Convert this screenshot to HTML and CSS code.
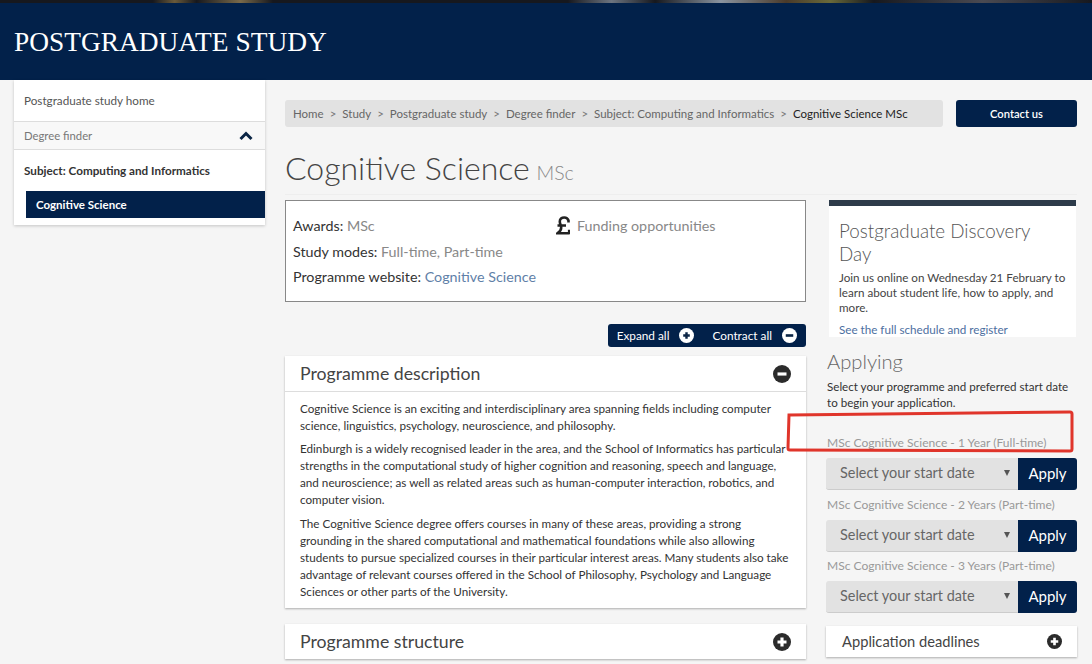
FILE: index.html
```html
<!DOCTYPE html>
<html lang="en">
<head>
    <meta charset="UTF-8">
    <title>Cognitive Science MSc</title>
    <link rel="stylesheet" href="styles.css">
</head>
<body>

<div class="photo-strip"></div>
<header class="site-header">
    <h1>POSTGRADUATE STUDY</h1>
</header>

<div class="page">
    <nav class="side-nav">
        <a href="#" class="nav-home">Postgraduate study home</a>
        <div class="nav-finder">
            <span>Degree finder</span>
            <svg width="14" height="10" viewBox="0 0 14 10"><path d="M1.500 8 7 2.500 12.500 8" fill="none" stroke="#0b2545" stroke-width="3"/></svg>
        </div>
        <a href="#" class="nav-subject">Subject: Computing and Informatics</a>
        <a href="#" class="nav-active">Cognitive Science</a>
    </nav>

    <main class="content">
        <div class="top-row">
            <div class="breadcrumb">
                <a href="#">Home</a><i>&gt;</i>
                <a href="#">Study</a><i>&gt;</i>
                <a href="#">Postgraduate study</a><i>&gt;</i>
                <a href="#">Degree finder</a><i>&gt;</i>
                <a href="#">Subject: Computing and Informatics</a><i>&gt;</i>
                <b>Cognitive Science MSc</b>
            </div>
            <a href="#" class="contact-btn">Contact us</a>
        </div>

        <h2 class="page-title">Cognitive Science <small>MSc</small></h2>

        <div class="columns">
            <div class="main-col">
                <div class="facts">
                    <div class="facts-left">
                        <p><span>Awards:</span> MSc</p>
                        <p><span>Study modes:</span> Full-time, Part-time</p>
                        <p><span>Programme website:</span> <a href="#">Cognitive Science</a></p>
                    </div>
                    <div class="facts-right">
                        <svg width="14" height="19" viewBox="0 0 14 19"><path d="M12.500 6.500V4.500C11.800 2.500 10.300 1.500 8.300 1.500 5.600 1.500 3.800 3 3.800 5.500c0 2.500 1.400 4 1.400 6.200 0 2.300-1.200 3.800-3.700 5.600h10.800c.6 0 .9-.3.9-.9v-2.600M1.500 9.500h8.500" fill="none" stroke="#222" stroke-width="2.600"/></svg>
                        <span>Funding opportunities</span>
                    </div>
                </div>

                <div class="toggle-row">
                    <div class="toggle-all">
                        <span>Expand all</span>
                        <svg class="round-icon" viewBox="0 0 16 16"><circle cx="8" cy="8" r="8" fill="#fff"/><path d="M8 4.500v7M4.500 8h7" stroke="#0b2545" stroke-width="2.600"/></svg>
                        <span class="contract">Contract all</span>
                        <svg class="round-icon" viewBox="0 0 16 16"><circle cx="8" cy="8" r="8" fill="#fff"/><path d="M4 8h8" stroke="#0b2545" stroke-width="2.800"/></svg>
                    </div>
                </div>

                <section class="panel">
                    <div class="panel-head open">
                        <h3>Programme description</h3>
                        <svg class="round-icon big" viewBox="0 0 16 16"><circle cx="8" cy="8" r="8" fill="#2b2b2b"/><path d="M4 8h8" stroke="#fff" stroke-width="2.800"/></svg>
                    </div>
                    <div class="panel-body">
                        <p>Cognitive Science is an exciting and interdisciplinary area spanning fields including computer<br>science, linguistics, psychology, neuroscience, and philosophy.</p>
                        <p>Edinburgh is a widely recognised leader in the area, and the School of Informatics has particular<br>strengths in the computational study of higher cognition and reasoning, speech and language,<br>and neuroscience; as well as related areas such as human-computer interaction, robotics, and<br>computer vision.</p>
                        <p>The Cognitive Science degree offers courses in many of these areas, providing a strong<br>grounding in the shared computational and mathematical foundations while also allowing<br>students to pursue specialized courses in their particular interest areas. Many students also take<br>advantage of relevant courses offered in the School of Philosophy, Psychology and Language<br>Sciences or other parts of the University.</p>
                    </div>
                </section>

                <section class="panel">
                    <div class="panel-head">
                        <h3>Programme structure</h3>
                        <svg class="round-icon big" viewBox="0 0 16 16"><circle cx="8" cy="8" r="8" fill="#2b2b2b"/><path d="M8 4v8M4 8h8" stroke="#fff" stroke-width="2.800"/></svg>
                    </div>
                </section>
            </div>

            <aside class="side-col">
                <div class="promo">
                    <h4>Postgraduate Discovery<br>Day</h4>
                    <p>Join us online on Wednesday 21 February to learn about student life, how to apply, and more.</p>
                    <a href="#">See the full schedule and register</a>
                </div>

                <h3 class="apply-title">Applying</h3>
                <p class="apply-intro">Select your programme and preferred start date to begin your application.</p>

                <div class="apply-item first">
                    <label>MSc Cognitive Science - 1 Year (Full-time)</label>
                    <div class="apply-row">
                        <div class="fake-select">Select your start date</div>
                        <button>Apply</button>
                    </div>
                </div>
                <div class="apply-item">
                    <label>MSc Cognitive Science - 2 Years (Part-time)</label>
                    <div class="apply-row">
                        <div class="fake-select">Select your start date</div>
                        <button>Apply</button>
                    </div>
                </div>
                <div class="apply-item">
                    <label>MSc Cognitive Science - 3 Years (Part-time)</label>
                    <div class="apply-row">
                        <div class="fake-select">Select your start date</div>
                        <button>Apply</button>
                    </div>
                </div>

                <div class="deadlines">
                    <span>Application deadlines</span>
                    <svg class="round-icon" viewBox="0 0 16 16"><circle cx="8" cy="8" r="8" fill="#2b2b2b"/><path d="M8 4v8M4 8h8" stroke="#fff" stroke-width="2.800"/></svg>
                </div>
            </aside>
        </div>
    </main>
</div>

<svg class="annotation" width="290" height="44" viewBox="0 0 290 44"><path d="M3 5 284 2Q286 2 286 4L286 39Q286 41 284 41L4 40Q2 40 2 38Z" fill="none" stroke="#e0352b" stroke-width="3"/></svg>

</body>
</html>
```

FILE: styles.css
```css
html, body {
    height: 664px;
    overflow: hidden;
}

body {
    font-family: Lato, "Noto Sans", Arial, sans-serif;
    margin: 0;
    padding: 0;
    background-color: #f5f5f5;
    color: #333;
    position: relative;
}

a {
    text-decoration: none;
}

.photo-strip {
    height: 3px;
    background: linear-gradient(90deg, #16181e 0, #16181e 14%, #6a5a3a 16%, #16181e 18%, #7a6a4a 22%, #16181e 25%, #16181e 52%, #6c7480 56%, #16181e 60%, #8a94a0 66%, #4a3a2a 72%, #6a6a3a 76%, #16181e 80%, #4a4a52 90%, #16181e 100%);
}

.site-header {
    height: 75px;
    padding-top: 2px;
    background-color: #02214a;
    display: flex;
    align-items: center;
    padding-left: 14px;
}

.site-header h1 {
    margin: 0;
    font-family: "Liberation Serif", "Times New Roman", serif;
    font-weight: normal;
    font-size: 27.400px;
    color: #fff;
}

.page {
    display: flex;
    padding-left: 14px;
}

/* left nav */
.side-nav {
    width: 251px;
    height: 145px;
    background-color: #fff;
    box-shadow: 0 1px 3px rgba(0, 0, 0, 0.2);
    font-size: 11.700px;
    flex-shrink: 0;
}

.side-nav a {
    display: block;
}

.nav-home {
    height: 41px;
    line-height: 41px;
    padding-left: 10px;
    color: #555;
    border-bottom: 1px solid #ddd;
}

.nav-finder {
    height: 27px;
    padding: 0 12px 0 10px;
    display: flex;
    align-items: center;
    justify-content: space-between;
    background-color: #f8f8f8;
    border-bottom: 1px solid #ddd;
    color: #777;
    font-size: 11.300px;
}

.nav-subject {
    height: 41px;
    line-height: 41px;
    padding-left: 10px;
    color: #333;
    font-weight: 700;
}

.nav-active {
    margin-left: 12px;
    height: 27px;
    line-height: 28px;
    padding-left: 10px;
    background-color: #02214a;
    color: #fff;
    font-weight: 700;
    font-size: 11.500px;
}

/* main area */
.content {
    margin-left: 20px;
    width: 792px;
}

.top-row {
    display: flex;
    justify-content: space-between;
    margin-top: 20px;
}

.breadcrumb {
    width: 658px;
    height: 27px;
    padding-left: 8px;
    box-sizing: border-box;
    line-height: 27px;
    background-color: #e2e2e2;
    border-radius: 3px;
    font-size: 11.500px;
    white-space: nowrap;
}

.breadcrumb a {
    color: #666;
}

.breadcrumb i {
    font-style: normal;
    color: #777;
    margin: 0 3px 0 6px;
}

.breadcrumb b {
    font-weight: normal;
    color: #222;
}

.contact-btn {
    width: 121px;
    height: 27px;
    line-height: 27px;
    text-align: center;
    background-color: #02214a;
    color: #fff;
    border-radius: 3px;
    font-size: 11.200px;
    font-weight: 600;
}

.page-title {
    margin: 20px 0 0;
    height: 47px;
    font-size: 32px;
    line-height: 42px;
    font-weight: 300;
    color: #444;
    border-bottom: 1px solid #eee;
}

.page-title small {
    margin-left: -2px;
    font-size: 19.500px;
    color: #888;
}

.columns {
    display: flex;
    justify-content: space-between;
    margin-top: 5px;
}

.main-col {
    width: 521px;
}

.facts {
    display: flex;
    height: 102px;
    box-sizing: border-box;
    padding: 15px 7px;
    background-color: #fff;
    border: 1px solid #888;
    font-size: 14.300px;
    color: #888;
}

.facts p {
    margin: 0 0 5px;
    line-height: 20.500px;
}

.facts p span {
    color: #333;
}

.facts a {
    color: #5f7fa8;
}

.facts-left {
    width: 263px;
}

.facts-right {
    display: flex;
    align-items: flex-start;
    gap: 7px;
}

.facts-right span {
    line-height: 20px;
}

.toggle-row {
    display: flex;
    justify-content: flex-end;
    margin-top: 22px;
}

.toggle-all {
    display: flex;
    align-items: center;
    height: 23px;
    padding: 0 9px;
    background-color: #02214a;
    color: #fff;
    font-size: 11.800px;
    border-radius: 3px;
}

.round-icon {
    width: 15px;
    height: 15px;
    margin-left: 10px;
}

.round-icon.big {
    width: 18px;
    height: 18px;
    margin: 0;
}

.contract {
    margin-left: 18px;
}

.panel {
    margin-top: 9px;
    background-color: #fff;
    box-shadow: 0 1px 2px rgba(0, 0, 0, 0.3);
}

.panel + .panel {
    margin-top: 16px;
}

.panel-head {
    height: 35px;
    display: flex;
    align-items: center;
    justify-content: space-between;
    padding: 0 15px;
}

.panel-head.open {
    border-bottom: 1px solid #ddd;
}

.panel-head h3 {
    margin: 0 0 1px;
    font-size: 17.700px;
    font-weight: normal;
    color: #444;
}

.panel-body {
    padding: 8px 15px 8px;
    font-size: 11.700px;
    line-height: 17px;
    color: #333;
    white-space: nowrap;
}

.panel-body p {
    margin: 0 0 6px;
}

.panel-body p:last-child {
    margin-top: 7px;
    margin-bottom: 0;
}

/* right column */
.side-col {
    width: 251px;
}

.promo {
    margin: 0 1px 0 3px;
    height: 137px;
    box-sizing: border-box;
    padding: 13px 5px 0 10px;
    background-color: #fff;
    border-top: 6px solid #2d3b4a;
    overflow: hidden;
}

.promo h4 {
    margin: 0 0 5px;
    font-size: 18.800px;
    line-height: 23px;
    font-weight: 300;
    color: #555;
}

.promo p {
    margin: 0 0 3px;
    font-size: 11.650px;
    line-height: 15px;
    color: #444;
}

.promo a {
    font-size: 11.650px;
    line-height: 15px;
    color: #4d6f9f;
}

.apply-title {
    margin: 12px 0 6px 1px;
    font-size: 20.200px;
    line-height: 24px;
    font-weight: 300;
    color: #666;
}

.apply-intro {
    margin: 0 0 0 1px;
    font-size: 11.600px;
    line-height: 16px;
    color: #333;
}

.apply-item label {
    display: block;
    height: 22px;
    margin-left: 1px;
    margin-bottom: 4px;
    line-height: 22px;
    font-size: 12.050px;
    color: #999;
    white-space: nowrap;
}

.apply-item.first {
    margin-top: 21px;
}

.apply-row {
    display: flex;
    height: 32px;
    margin-bottom: 3.500px;
}

.fake-select {
    position: relative;
    flex: 1;
    box-sizing: border-box;
    padding-left: 14px;
    line-height: 30px;
    font-size: 14.450px;
    color: #666;
    background-color: #e2e2e2;
    border-radius: 3px 0 0 3px;
    border-bottom: 1px solid #ccc;
}

.fake-select::after {
    content: "";
    position: absolute;
    right: 8px;
    top: 12px;
    border-left: 3px solid transparent;
    border-right: 3px solid transparent;
    border-top: 6px solid #555;
}

.apply-row button {
    width: 59px;
    border: none;
    padding: 0 0 2px;
    background-color: #02214a;
    color: #fff;
    font-family: inherit;
    font-size: 15px;
    border-radius: 0 3px 3px 0;
}

.deadlines {
    margin-top: 12.500px;
    height: 31px;
    display: flex;
    align-items: center;
    justify-content: space-between;
    padding: 0 15px 0 16px;
    background-color: #fff;
    box-shadow: 0 1px 2px rgba(0, 0, 0, 0.3);
    font-size: 14.700px;
    color: #444;
}

.deadlines .round-icon {
    margin: 0;
}

/* red box drawn on the screenshot */
.annotation {
    position: absolute;
    left: 786px;
    top: 410px;
}
```
